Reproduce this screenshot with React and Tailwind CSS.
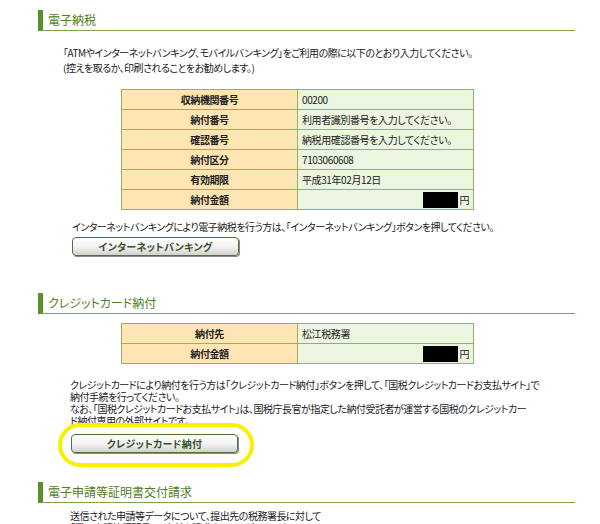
import React from "react";

const jp = {
  fontFamily: '"Noto Sans CJK JP", "Noto Sans", sans-serif',
  fontFeatureSettings: '"palt"',
};

function SectionTitle({ children }) {
  return (
    <div className="flex h-[21px] items-center border-l-[5px] border-b border-l-[#5b8f2b] border-b-[#78a64a] pl-[5px] text-[12px] leading-none text-[#4e8021]">
      {children}
    </div>
  );
}

function InfoTable({ rows }) {
  return (
    <table className="ml-[83px] w-[353px] border-collapse text-[10px] tracking-[-0.4px] text-[#222]">
      <tbody>
        {rows.map((r) => (
          <tr key={r.label} className="h-[20px]">
            <td className="w-1/2 whitespace-nowrap border border-[#8fb65f] bg-[#ffe4b4] p-0 text-center font-bold">
              {r.label}
            </td>
            <td className="w-1/2 whitespace-nowrap border border-[#8fb65f] bg-[#ebf5df] p-0 pl-[4px]">
              {r.yen ? (
                <div className="flex items-end justify-end pr-[4px]">
                  <span className="mb-[-1px] inline-block h-[16px] w-[35px] bg-black" />
                  <span className="ml-[1px]">円</span>
                </div>
              ) : (
                r.value
              )}
            </td>
          </tr>
        ))}
      </tbody>
    </table>
  );
}

function GelButton({ children }) {
  return (
    <button className="flex h-[19px] w-[167px] items-center justify-center rounded-[4px] border border-[#4c7637] bg-gradient-to-b from-white via-[#f3f3f3] to-[#d2d2d2] text-[10px] font-bold leading-none tracking-[0.3px] text-[#34532a] shadow-[1px_1px_0_#8a8a8a]">
      {children}
    </button>
  );
}

export default function App() {
  return (
    <div className="h-[524px] w-[600px] overflow-hidden bg-white text-[#222]" style={jp}>
      <div className="pl-[38px] pr-[25px] pt-[10px]">
        {/* 電子納税 */}
        <SectionTitle>電子納税</SectionTitle>

        <p className="mt-[14px] whitespace-nowrap pl-[25px] text-[10px] leading-[15px] tracking-[-0.5px]">
          「ATMやインターネットバンキング、モバイルバンキング」をご利用の際に以下のとおり入力してください。
          <br />
          (控えを取るか、印刷されることをお勧めします。)
        </p>

        <div className="mt-[14px]">
          <InfoTable
            rows={[
              { label: "収納機関番号", value: "00200" },
              { label: "納付番号", value: "利用者識別番号を入力してください。" },
              { label: "確認番号", value: "納税用確認番号を入力してください。" },
              { label: "納付区分", value: "7103060608" },
              { label: "有効期限", value: "平成31年02月12日" },
              { label: "納付金額", yen: true },
            ]}
          />
        </div>

        <p className="mt-[9px] whitespace-nowrap pl-[34px] text-[10px] leading-[15px] tracking-[-0.5px]">
          インターネットバンキングにより電子納税を行う方は、「インターネットバンキング」ボタンを押してください。
        </p>
        <div className="mt-[3px] pl-[34px]">
          <GelButton>インターネットバンキング</GelButton>
        </div>

        {/* クレジットカード納付 */}
        <div className="mt-[37px]">
          <SectionTitle>クレジットカード納付</SectionTitle>
        </div>

        <div className="mt-[9px]">
          <InfoTable
            rows={[
              { label: "納付先", value: "松江税務署" },
              { label: "納付金額", yen: true },
            ]}
          />
        </div>

        <p className="mt-[15px] whitespace-nowrap pl-[32px] text-[10px] leading-[12px] tracking-[-0.5px]">
          クレジットカードにより納付を行う方は「クレジットカード納付」ボタンを押して、「国税クレジットカードお支払サイト」で
          <br />
          納付手続を行ってください。
          <br />
          なお、「国税クレジットカードお支払サイト」は、国税庁長官が指定した納付受託者が運営する国税のクレジットカー
          <br />
          ド納付専用の外部サイトです。
        </p>

        <div className="mt-[7px] pl-[33px]">
          <div className="relative w-[167px]">
            <GelButton>クレジットカード納付</GelButton>
            <div className="pointer-events-none absolute -bottom-[14px] -left-[13px] -right-[16px] -top-[11px] rounded-[22px] border-[4px] border-[#f8f000]" />
          </div>
        </div>

        {/* 電子申請等証明書交付請求 */}
        <div className="mt-[29px]">
          <SectionTitle>電子申請等証明書交付請求</SectionTitle>
        </div>

        <p className="mt-[7px] whitespace-nowrap pl-[32px] text-[10px] leading-[12px] tracking-[-0.5px]">
          送信された申請等データについて、提出先の税務署長に対して
          <br />
          「電子申請等証明書」の交付を請求することができます。
        </p>
      </div>
    </div>
  );
}
